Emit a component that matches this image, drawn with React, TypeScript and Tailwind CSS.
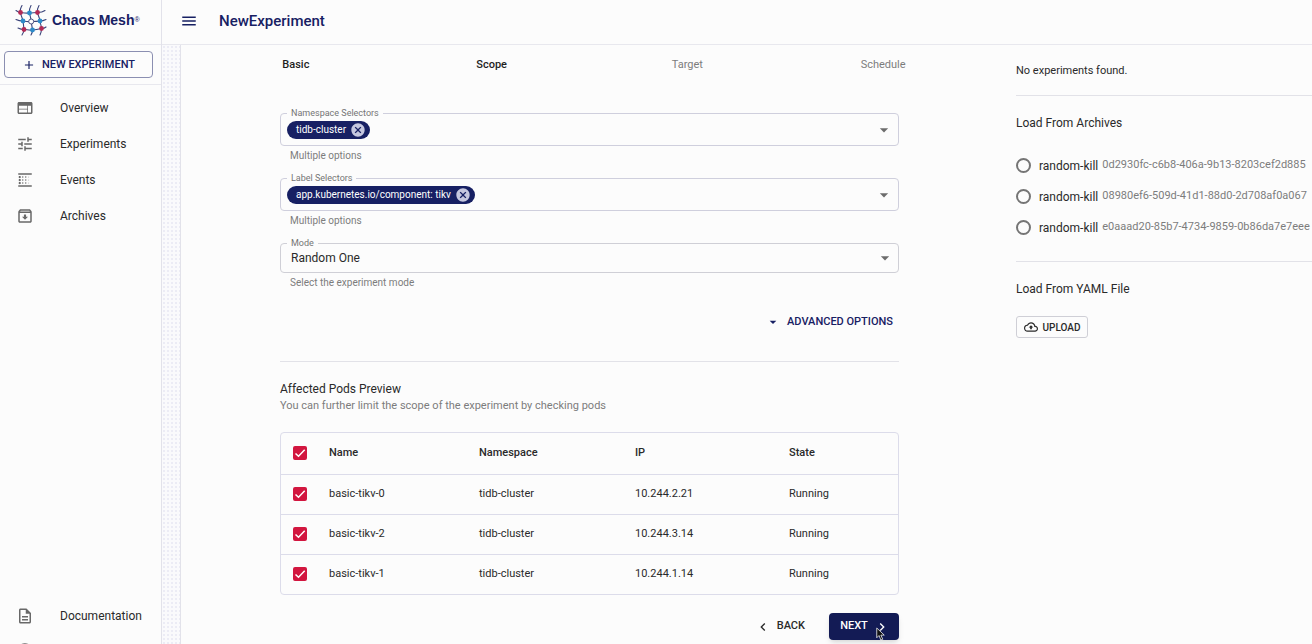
import { useState } from "react";
import type { ReactNode } from "react";
import type { IconType } from "react-icons";
import {
  MdAdd,
  MdArrowDropDown,
  MdBlurLinear,
  MdCancel,
  MdMenu,
  MdNavigateBefore,
  MdNavigateNext,
  MdOutlineArchive,
  MdOutlineCloudUpload,
  MdOutlineDescription,
  MdTune,
  MdWeb,
} from "react-icons/md";
import { FaGithub } from "react-icons/fa";

interface NavEntry {
  label: string;
  icon: IconType;
  iconOnly?: boolean;
}

const NAV: NavEntry[] = [
  { label: "Overview", icon: MdWeb },
  { label: "Experiments", icon: MdTune },
  { label: "Events", icon: MdBlurLinear },
  { label: "Archives", icon: MdOutlineArchive },
];

const NAV_BOTTOM: NavEntry[] = [
  { label: "Documentation", icon: MdOutlineDescription },
  { label: "GitHub", icon: FaGithub, iconOnly: true },
];

const STEPS = ["Basic", "Scope", "Target", "Schedule"];

const PODS = [
  { name: "basic-tikv-0", namespace: "tidb-cluster", ip: "10.244.2.21", state: "Running" },
  { name: "basic-tikv-2", namespace: "tidb-cluster", ip: "10.244.3.14", state: "Running" },
  { name: "basic-tikv-1", namespace: "tidb-cluster", ip: "10.244.1.14", state: "Running" },
];

const ARCHIVES = [
  "0d2930fc-c6b8-406a-9b13-8203cef2d885",
  "08980ef6-509d-41d1-88d0-2d708af0a067",
  "e0aaad20-85b7-4734-9859-0b86da7e7eee",
];

function Logo() {
  return (
    <svg viewBox="0 0 32 32" className="size-8 shrink-0" fill="none" aria-hidden="true">
      <g stroke="#3b447a" strokeWidth="1.1" strokeLinecap="round">
        <path d="M7 1.500C5 5 5 7 5.500 8.500C6 12 7.500 14 8 17C8.500 20 8.500 22 9 25.500C9 27.500 8.500 29 7 31" />
        <path d="M16 1.500C14.500 4 14 6 14.500 9C15 12 16 14 16.200 17.500C16.500 20 17 22 17.500 26C17.500 28 17 29.500 16 31" />
        <path d="M24 1.500C22.500 4 22 6 22.500 8.500C23 12 25 14 25 17C25 20 26.500 21 26.500 24.500C26.500 27 26 29 25 31" />
        <path d="M1 6.500C3 8 4 8.500 5.500 8.500C9 9 11 9.500 14.500 9C18 9 19 8.500 22.500 8.500C25 8.500 28 8 30 6.500" />
        <path d="M1 15.500C3 16.500 5 17 8 17C11 17.500 13 18 16.200 17.500C19 17.500 22 17.500 25 17C27 17 29 16.500 31 15.500" />
        <path d="M3 24C5 25 7 25.500 9 25.500C12 25.500 14 26.500 17.500 26C21 26 23 25 26.500 24.500C28.500 24.500 30 24 31 23" />
      </g>
      <g fill="#b22a55">
        <circle cx="5.500" cy="8.500" r="2.400" />
        <circle cx="22.500" cy="8.500" r="2.400" />
        <circle cx="9" cy="25.500" r="2.400" />
        <circle cx="26.500" cy="24.500" r="2.400" />
      </g>
      <g fill="#2d8bc9">
        <circle cx="14.500" cy="9" r="2.400" />
        <circle cx="8" cy="17" r="2.400" />
        <circle cx="25" cy="17" r="2.400" />
        <circle cx="17.500" cy="26" r="2.400" />
      </g>
      <circle cx="16.200" cy="17.500" r="2.500" fill="#fff" stroke="#4a5283" />
    </svg>
  );
}

function NavList({ items }: { items: NavEntry[] }) {
  return (
    <ul>
      {items.map(({ label, icon: Icon, iconOnly }) => (
        <li key={label}>
          <a
            href="#"
            aria-label={label}
            className="flex h-9 items-center gap-[26px] px-4 text-[12px] text-[#2a2a2a]"
          >
            <Icon className="size-[18px] shrink-0 text-[#686868]" />
            {!iconOnly && label}
          </a>
        </li>
      ))}
    </ul>
  );
}

function Field({
  id,
  label,
  help,
  children,
}: {
  id: string;
  label: string;
  help: string;
  children: ReactNode;
}) {
  return (
    <div className="relative">
      <label
        htmlFor={id}
        className="absolute -top-2 left-[7px] z-10 bg-[#fcfcfc] px-1 text-[9px] leading-4 text-[#757575]"
      >
        {label}
      </label>
      {children}
      <p className="mt-1 ml-[10px] text-[10px] leading-3 text-[#7c7c7c]">{help}</p>
    </div>
  );
}

function ChipField({ id, label, chip }: { id: string; label: string; chip: string }) {
  return (
    <Field id={id} label={label} help="Multiple options">
      <div className="flex h-[33px] items-center rounded border border-[#cfcfdd] pr-1 pl-[6px]">
        <span className="flex h-[18px] items-center gap-1 rounded-full bg-[#172063] pr-1 pl-[9px] text-[10px] whitespace-nowrap text-white">
          {chip}
          <button type="button" aria-label={`Remove ${chip}`} className="text-[#c5c7df]">
            <MdCancel className="size-4" />
          </button>
        </span>
        <input id={id} className="min-w-0 flex-1 bg-transparent px-2 text-[12px] outline-none" />
        <button type="button" aria-label={`Open ${label}`} className="text-[#6c6c6c]">
          <MdArrowDropDown className="size-5" />
        </button>
      </div>
    </Field>
  );
}

function Check({
  label,
  checked,
  onChange,
}: {
  label: string;
  checked: boolean;
  onChange: () => void;
}) {
  return (
    <span className="relative block size-[14px]">
      <input
        type="checkbox"
        aria-label={label}
        checked={checked}
        onChange={onChange}
        className="peer block size-[14px] appearance-none rounded-[2px] border-2 border-[#757575] checked:border-[#d2163f] checked:bg-[#d2163f]"
      />
      <svg
        viewBox="0 0 14 14"
        className="pointer-events-none absolute inset-0 hidden size-[14px] peer-checked:block"
        fill="none"
        stroke="#fff"
        strokeWidth="1.5"
      >
        <path d="M2.500 7.500L5.500 10.300L11.700 3.800" />
      </svg>
    </span>
  );
}

function PodsTable() {
  const [selected, setSelected] = useState(PODS.map((p) => p.name));
  const all = selected.length === PODS.length;

  const toggle = (name: string) =>
    setSelected((s) => (s.includes(name) ? s.filter((n) => n !== name) : [...s, name]));

  return (
    <div className="mt-[18px] rounded border border-[#dcdcea]">
      <table className="w-full table-fixed text-left text-[11px] text-[#2a2a2a]">
        <thead>
          <tr className="h-[41px]">
            <th className="w-12 pl-3">
              <Check
                label="Select all pods"
                checked={all}
                onChange={() => setSelected(all ? [] : PODS.map((p) => p.name))}
              />
            </th>
            <th className="w-[150px] font-medium">Name</th>
            <th className="w-[156px] font-medium">Namespace</th>
            <th className="w-[154px] font-medium">IP</th>
            <th className="font-medium">State</th>
          </tr>
        </thead>
        <tbody>
          {PODS.map((pod) => (
            <tr key={pod.name} className="h-10 border-t border-[#dcdcea]">
              <td className="pl-3">
                <Check
                  label={`Select ${pod.name}`}
                  checked={selected.includes(pod.name)}
                  onChange={() => toggle(pod.name)}
                />
              </td>
              <td>{pod.name}</td>
              <td>{pod.namespace}</td>
              <td>{pod.ip}</td>
              <td>{pod.state}</td>
            </tr>
          ))}
        </tbody>
      </table>
    </div>
  );
}

function Sidebar() {
  return (
    <aside className="flex w-[162px] shrink-0 flex-col border-r border-[#e2e2ea]">
      <div className="flex h-[45px] shrink-0 items-center gap-[5px] border-b border-[#e8e8ee] pb-1 pl-[15px] text-[#172063]">
        <Logo />
        <span className="font-['Liberation_Sans'] text-sm font-bold whitespace-nowrap">
          Chaos Mesh<sup className="text-[7px] font-normal">®</sup>
        </span>
      </div>
      <div className="border-b border-[#e8e8ee] px-1 py-[6px]">
        <button
          type="button"
          className="flex h-[27px] w-full max-w-[149px] items-center justify-center gap-[6px] rounded border border-[#8b8fb1] pt-px text-[11px] font-medium text-[#172063]"
        >
          <MdAdd className="size-[14px]" />
          NEW EXPERIMENT
        </button>
      </div>
      <nav className="flex-1 pt-[5px]">
        <NavList items={NAV} />
      </nav>
      <nav className="h-[46px] shrink-0 overflow-hidden">
        <NavList items={NAV_BOTTOM} />
      </nav>
    </aside>
  );
}

function ScopeForm() {
  return (
    <form className="min-w-0 flex-1" onSubmit={(e) => e.preventDefault()}>
      <ol className="-mx-[82px] grid grid-cols-4 pt-3 text-center text-[11px] leading-4">
        {STEPS.map((step, i) => (
          <li key={step} className={i < 2 ? "font-medium text-[#1f1f1f]" : "text-[#7c7c7c]"}>
            {step}
          </li>
        ))}
      </ol>

      <div className="mt-10 flex flex-col gap-4">
        <ChipField id="namespaces" label="Namespace Selectors" chip="tidb-cluster" />
        <ChipField id="labels" label="Label Selectors" chip="app.kubernetes.io/component: tikv" />
        <Field id="mode" label="Mode" help="Select the experiment mode">
          <div className="relative">
            <select
              id="mode"
              className="block h-[30px] w-full appearance-none rounded border border-[#cfcfd6] bg-transparent px-[10px] text-[12px] text-[#2a2a2a]"
            >
              <option>Random One</option>
              <option>Fixed Number</option>
              <option>Fixed Percent</option>
              <option>All</option>
            </select>
            <MdArrowDropDown className="pointer-events-none absolute top-[5px] right-1 size-5 text-[#6c6c6c]" />
          </div>
        </Field>
      </div>

      <div className="mt-[19px] flex justify-end pr-[6px]">
        <button
          type="button"
          className="flex h-7 items-center gap-[6px] text-[11px] font-medium text-[#172063]"
        >
          <MdArrowDropDown className="size-4" />
          ADVANCED OPTIONS
        </button>
      </div>

      <hr className="mt-[25px] border-[#e2e2e8]" />

      <h2 className="mt-[18px] text-[12px] leading-[18px] text-[#2a2a2a]">Affected Pods Preview</h2>
      <p className="text-[11px] leading-4 text-[#7c7c7c]">
        You can further limit the scope of the experiment by checking pods
      </p>

      <PodsTable />

      <div className="mt-[18px] flex items-center justify-end gap-6">
        <button type="button" className="flex items-center gap-[6px] text-[11px] font-medium text-[#2a2a2a]">
          <MdNavigateBefore className="size-4" />
          BACK
        </button>
        <button
          type="submit"
          className="relative flex h-[27px] w-[70px] items-center justify-center gap-[6px] rounded bg-[#131b55] pl-[2px] text-[11px] font-medium text-white shadow-md"
        >
          NEXT
          <MdNavigateNext className="size-4" />
          <svg viewBox="0 0 12 18" className="absolute top-[14px] left-[47px] h-[14px] w-[9px]">
            <path d="M1 1v13l3-3 2.500 6 2.500-1-2.500-5.500H11z" fill="#111" stroke="#fff" strokeWidth="1" />
          </svg>
        </button>
      </div>
    </form>
  );
}

function LoadPanel() {
  return (
    <aside className="w-[296px] shrink-0 pt-[17px] text-[#2a2a2a]">
      <p className="text-[11px] leading-[18px]">No experiments found.</p>
      <hr className="mt-[15px] border-[#e2e2e8]" />

      <h2 className="mt-[18px] text-[12px] leading-[18px]">Load From Archives</h2>
      <div className="mt-[18px]">
        {ARCHIVES.map((uuid) => (
          <label key={uuid} className="flex h-[31px] items-center whitespace-nowrap">
            <input
              type="radio"
              name="archive"
              className="size-[15px] shrink-0 appearance-none rounded-full border-2 border-[#757575] checked:border-4 checked:border-[#172063]"
            />
            <span className="ml-2 text-[12px]">random-kill</span>
            <span className="ml-1 text-[11px] text-[#7c7c7c]">{uuid}</span>
          </label>
        ))}
      </div>
      <hr className="mt-[18px] border-[#e2e2e8]" />

      <h2 className="mt-[18px] text-[12px] leading-[18px]">Load From YAML File</h2>
      <button
        type="button"
        className="mt-[18px] flex h-[22px] w-[72px] items-center justify-center gap-[5px] rounded-[3px] border border-[#cfcfd6] text-[10px] font-medium"
      >
        <MdOutlineCloudUpload className="size-[14px]" />
        UPLOAD
      </button>
    </aside>
  );
}

export default function App() {
  return (
    <div className="flex h-screen overflow-hidden bg-[#fcfcfc] font-[Roboto,sans-serif]">
      <Sidebar />
      <div className="flex min-w-0 flex-1 flex-col">
        <header className="flex h-[45px] shrink-0 items-center gap-[21px] border-b border-[#e8e8ee] pb-[2px] pl-[18px] text-[#172063]">
          <button type="button" aria-label="Toggle menu">
            <MdMenu className="size-[18px]" />
          </button>
          <h1 className="text-[15px] font-medium">NewExperiment</h1>
        </header>
        <div className="flex min-h-0 flex-1 bg-[#fafafc] bg-[radial-gradient(#ececf5_1px,transparent_1px)] bg-[size:4px_4px] pl-[18px]">
          <main className="flex min-w-0 flex-1 gap-[117px] border-l border-[#e2e2ea] bg-[#fcfcfc] pl-[99px]">
            <ScopeForm />
            <LoadPanel />
          </main>
        </div>
      </div>
    </div>
  );
}
